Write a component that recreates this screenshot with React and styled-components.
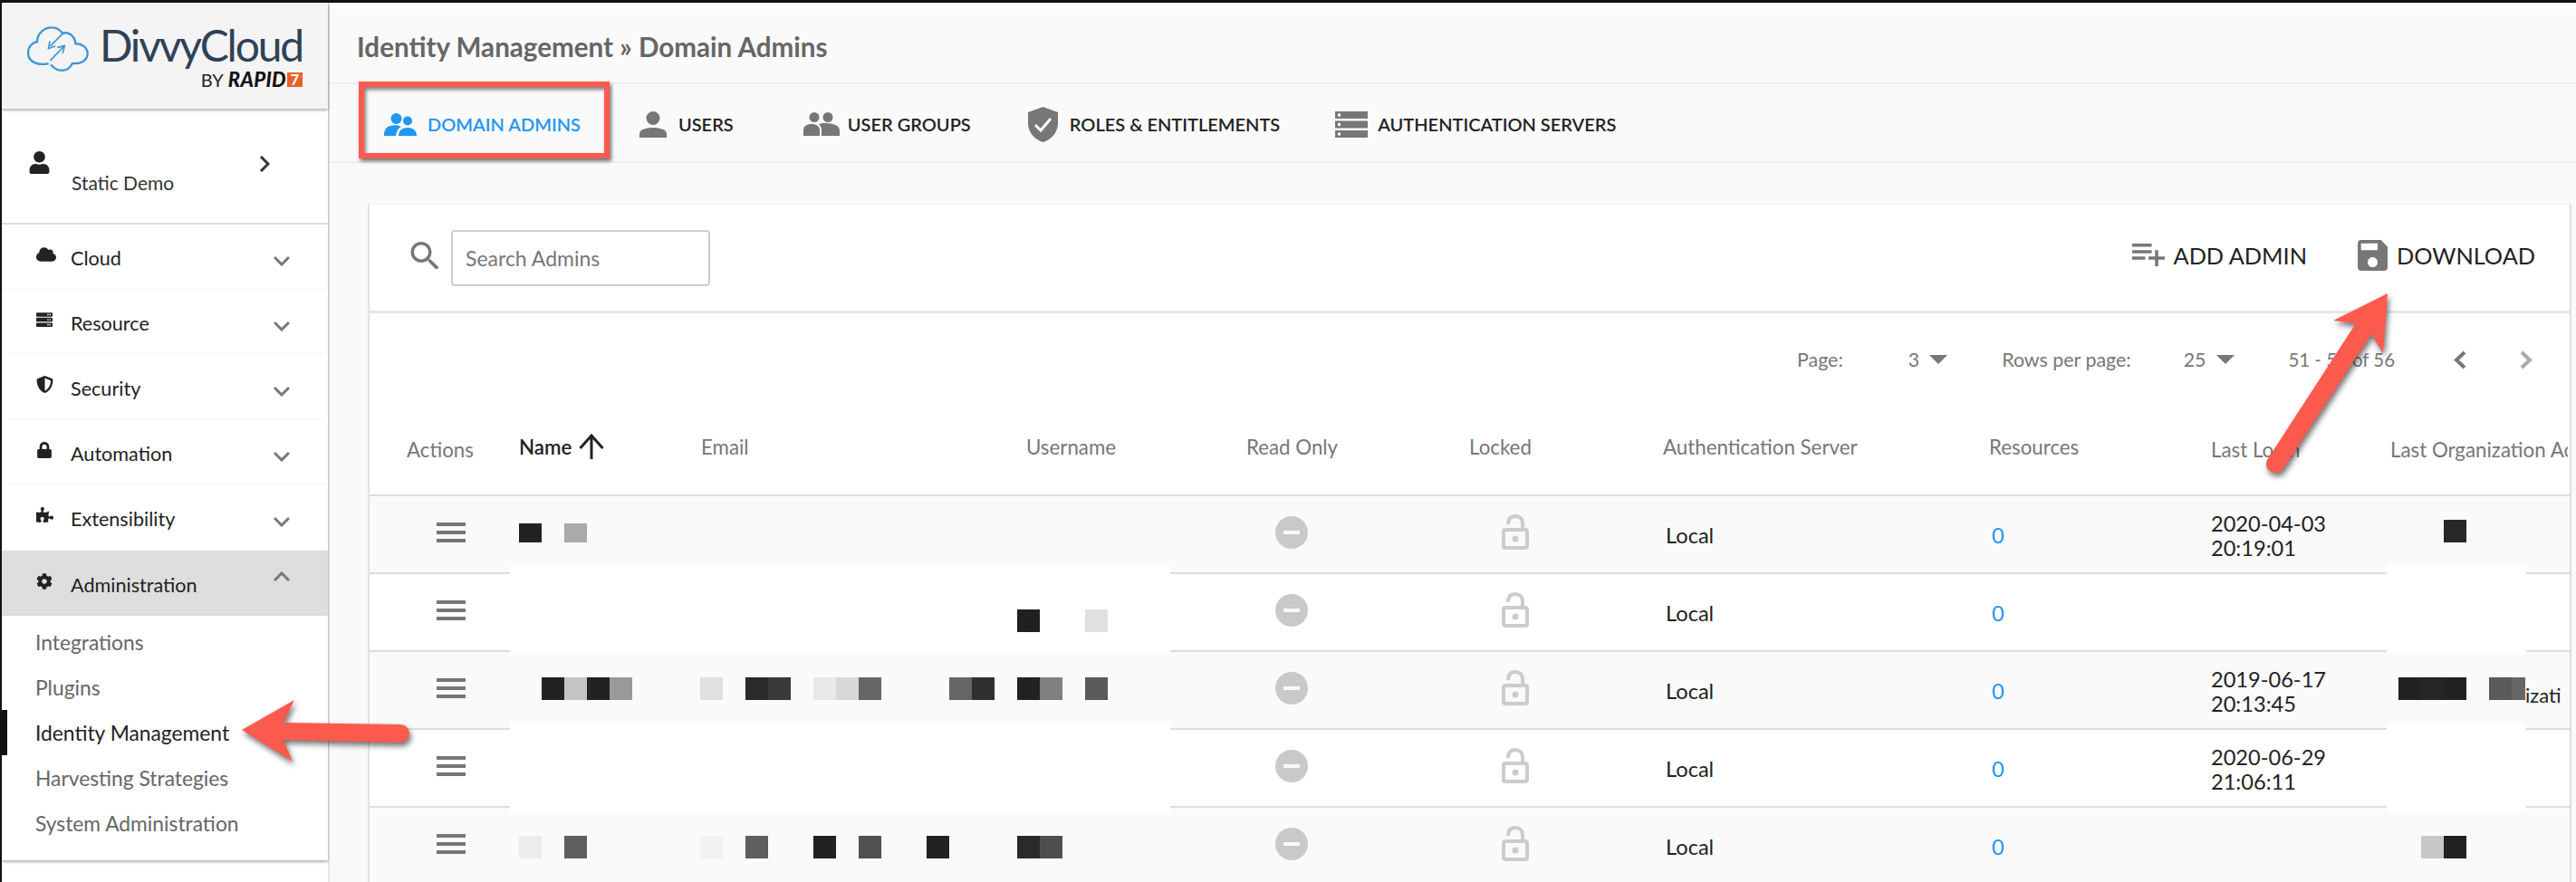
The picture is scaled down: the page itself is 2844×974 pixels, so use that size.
import React from 'react';
import styled, { createGlobalStyle } from 'styled-components';
import { FaCloud, FaServer, FaShieldAlt, FaLock, FaPuzzlePiece, FaCog, FaUser } from 'react-icons/fa';

const Global = createGlobalStyle`
  html, body { margin: 0; padding: 0; background: #fff; }
  * { box-sizing: border-box; }
  body { font-family: Lato, "Liberation Sans", sans-serif; }
`;

const Page = styled.div`
  position: relative; width: 2844px; height: 974px; overflow: hidden;
  display: flex; background: #fff;
  border-top: 3px solid #111; border-left: 2px solid #111;
`;

/* ---------- sidebar ---------- */
const Sidebar = styled.aside`
  width: 362px; flex: none; display: flex; flex-direction: column;
  border-right: 2px solid #e6e6e6; background: #fff;
`;
const SideInner = styled.div`
  display: flex; flex-direction: column; height: 947px; background: #fff;
  box-shadow: 0 2px 3px rgba(0,0,0,.3);
`;
const LogoBar = styled.div`
  height: 117px; flex: none; background: #f4f4f4; display: flex; align-items: flex-start;
  padding: 25px 0 0 28px; box-shadow: 0 2px 3px rgba(0,0,0,.3); position: relative; z-index: 1;
`;
const LogoText = styled.div`
  display: flex; flex-direction: column; align-items: flex-end; margin-left: 16px; width: 220px;
`;
const LogoName = styled.div`
  font-size: 48px; line-height: 44px; color: #2e4257; letter-spacing: -2.2px; white-space: nowrap;
`;
const LogoBy = styled.div`
  display: flex; align-items: center; font-size: 20px; line-height: 18px; color: #222; margin-top: 7px;
`;
const LogoRapid = styled.span`
  font-weight: 900; font-style: italic; font-size: 22px; line-height: 18px; color: #111; margin-left: 5px; letter-spacing: .3px;
`;
const LogoSeven = styled.span`
  background: #e8622a; color: #fff; font-size: 16px; font-weight: 900; line-height: 16px; width: 17px; text-align: center; margin-left: 1px;
`;
const UserBlock = styled.div`
  height: 128px; flex: none; border-bottom: 2px solid #ddd; display: flex; align-items: flex-start;
  padding: 47px 0 0 29px; position: relative; color: #222;
  > svg:last-child { margin-top: 5px; }
`;
const UserName = styled.span`
  font-size: 21px; color: #333; margin: 22px 0 0 23px; line-height: 26px; width: 207px;
`;
const NavRow = styled.div`
  height: 72px; flex: none; display: flex; align-items: center; padding-left: 36px; padding-right: 42px;
  background: ${p => (p.$open ? '#dedede' : '#fff')};
  border-bottom: ${p => (p.$open ? '0' : '2px solid #fafafa')};
  font-size: 21.6px; color: #222;
`;
const NavIcon = styled.span`
  width: 40px; flex: none; display: flex; margin-top: -5px; padding-left: 2px; color: #222;
`;
const NavLabel = styled.span` flex: 1; line-height: 26px; margin-top: 3px; `;
const SubList = styled.div` padding: 4px 0 16px; display: flex; flex-direction: column; `;
const SubItem = styled.div`
  height: 50px; display: flex; align-items: center; font-size: 22.8px; padding-left: ${p => (p.$active ? '31px' : '37px')};
  color: ${p => (p.$active ? '#222' : '#666')};
  border-left: ${p => (p.$active ? '6px solid #111' : '0')};
`;

/* ---------- main ---------- */
const Main = styled.main`
  flex: 1; min-width: 0; display: flex; flex-direction: column; background: #fafafa;
  border-top: 6px solid #fff;
`;
const TitleBar = styled.div`
  height: 84px; flex: none; border-bottom: 2px solid #eee; display: flex; align-items: center;
  padding: 2px 0 0 30px; font-size: 29.6px; font-weight: 700; color: #666;
`;
const TabBar = styled.div`
  height: 87px; flex: none; border-bottom: 2px solid #eee; display: flex; align-items: center; padding: 3px 0 0 60px;
`;
const Tab = styled.div`
  display: flex; align-items: center; margin-left: ${p => p.$ml || 0}px;
  font-size: 20px; font-weight: 600; white-space: nowrap; color: ${p => (p.$active ? '#2196f3' : '#222')};
  svg { flex: none; }
`;
const TabLabel = styled.span` margin-left: ${p => p.$ml}px; `;

const Card = styled.section`
  flex: 1; margin: 45px 5px 0 42px; background: #fff; min-height: 0;
  border-left: 2px solid #e3e3e3; border-top: 1px solid #f0f0f0; border-right: 2px solid #ddd;
  display: flex; flex-direction: column;
`;
const Toolbar = styled.div`
  height: 120px; flex: none; border-bottom: 3px solid #e6e6e6; display: flex; align-items: center; padding-left: 45px; padding-right: 38px;
`;
const SearchBox = styled.div`
  width: 286px; height: 62px; margin-left: 13px; border: 2px solid #ccc; border-radius: 4px;
  display: flex; align-items: center; padding-left: 14px; font-size: 23px; color: #777;
`;
const Spacer = styled.div` flex: 1; `;
const ToolBtn = styled.div`
  display: flex; align-items: center; font-size: 25.3px; color: #222; margin-left: ${p => p.$ml || 0}px; margin-top: -6px; white-space: nowrap;
  svg { margin-right: ${p => p.$gap}px; }
`;
const Pager = styled.div`
  height: 102px; flex: none; display: flex; align-items: center; justify-content: flex-end; padding-right: 41px;
  font-size: 21.4px; color: #777;
`;
const PagerItem = styled.span`
  margin-left: ${p => p.$ml}px; display: flex; align-items: center; white-space: nowrap;
  font-size: ${p => p.$size || 'inherit'};
`;

const columns = '165px 200px 350px 245px 253px 214px 360px 246px 197px 197px';
const HeadRow = styled.div`
  height: 100px; flex: none; display: grid; grid-template-columns: ${columns};
  border-bottom: 2px solid #ddd; align-items: center; font-size: 22.3px; color: #777;
`;
const HeadCell = styled.div`
  padding-left: ${p => p.$pl || 0}px; padding-bottom: ${p => (p.$high ? 8 : 2)}px;
  white-space: nowrap; overflow: hidden; display: flex; align-items: center;
  color: ${p => (p.$sorted ? '#222' : '#777')}; font-weight: ${p => (p.$sorted ? 600 : 400)};
`;
const Rows = styled.div` position: relative; flex: 1; min-height: 0; `;
const Row = styled.div`
  height: 86px; display: grid; grid-template-columns: ${columns}; align-items: center;
  border-bottom: 2px solid #ddd; background: ${p => (p.$odd ? '#fafafa' : '#fff')};
  font-size: 23.6px; color: #222;
`;
const Cell = styled.div`
  padding-left: ${p => p.$pl || 0}px; margin-top: ${p => p.$mt || 0}px; position: relative; display: flex; line-height: 27px;
  white-space: nowrap; overflow: hidden; min-width: 0;
`;
const Count = styled.span` color: #2196f3; `;
const Pixels = styled.div`
  position: relative; z-index: 2; align-self: start; display: flex; align-items: flex-start;
  margin-top: ${p => p.$top}px; padding-left: ${p => p.$pl || 0}px; height: 25px; font-size: 22px;
`;
const Pixel = styled.i`
  display: block; flex: none; width: ${p => p.$w || 25}px; height: ${p => p.$h || 25}px; background: ${p => p.$c || 'transparent'};
`;
const ClipText = styled.span` line-height: 40px; `;
const Band = styled.div`
  position: absolute; z-index: 1; height: 100px; background: #fff;
  top: ${p => p.$top}px; left: ${p => p.$left}px; width: ${p => p.$width}px;
`;

/* ---------- annotation overlays ---------- */
const Highlight = styled.div`
  position: absolute; left: 394px; top: 87px; width: 277px; height: 85px; border: 6px solid #fd5a4e;
  box-shadow: 2px 3px 4px rgba(0,0,0,.55), inset 2px 3px 4px rgba(0,0,0,.5); z-index: 5;
`;
const Arrow = styled.svg`
  position: absolute; z-index: 6; left: ${p => p.$left}px; top: ${p => p.$top}px;
  filter: drop-shadow(2px 4px 3px rgba(0,0,0,.55));
`;

/* ---------- icons ---------- */
const Chevron = ({ dir = 'down' }) => {
  const pts = dir === 'up' ? '1,10 9,2 17,10' : '1,2 9,10 17,2';
  return (
    <svg width="18" height="12" viewBox="0 0 18 12" style={{ flex: 'none', marginTop: dir === 'up' ? -15 : 10 }}>
      <polyline points={pts} fill="none" stroke="#777" strokeWidth="3" />
    </svg>
  );
};
const Logo = () => (
  <svg width="68" height="50" viewBox="90 84 204 150" style={{ flex: 'none', marginTop: 1 }} fill="none" stroke="#3d97d6" strokeWidth="7" strokeLinecap="round">
    <path d="M158 208 C128 214 93 204 93 172 C93 150 108 138 123 135 C123 105 150 87 172 88 C188 88 200 97 208 108" />
    <path d="M208 108 C225 100 248 115 250 142 C270 140 291 155 290 176 C288 200 265 210 240 207 C232 222 218 232 203 230 C190 230 178 222 170 213" />
    <path d="M168 148 L204 112 M160 158 L182 150 M160 158 L165 135" strokeWidth="5" />
    <path d="M212 150 L168 196 M214 148 L192 154 M214 148 L208 172" strokeWidth="5" />
  </svg>
);
const UsersIcon = ({ color = '#777' }) => (
  <svg width="36" height="25" viewBox="0 0 36 25" fill={color}>
    <circle cx="13.5" cy="6" r="6" />
    <circle cx="26" cy="8.5" r="5" />
    <path d="M0 25 C0 19 2 15 7 14 C11 13 16 13 19 15 C15 17 14 21 13 25 Z" />
    <path d="M16 25 C16 20 19 16 26 16 C33 16 36 20 36 25 Z" />
  </svg>
);
const UserIcon = () => (
  <svg width="30" height="29" viewBox="0 0 30 29" fill="#777">
    <circle cx="15" cy="7.5" r="7.5" />
    <path d="M0 29 V25 C0 20 7 18 15 18 C23 18 30 20 30 25 V29 Z" />
  </svg>
);
const GroupIcon = () => (
  <svg width="40" height="26" viewBox="0 0 40 26" fill="#777">
    <ellipse cx="12" cy="5.5" rx="5.5" ry="5.5" />
    <ellipse cx="27" cy="5.5" rx="5.5" ry="5.5" />
    <path d="M0 26 V20 C0 15 4 13 9 13 C14 13 18 15 18 20 V26 Z" />
    <path d="M20 26 V20 C20 16 18 14 17 13 C23 11 40 12 40 20 V26 Z" />
  </svg>
);
const ShieldIcon = () => (
  <svg width="33" height="39" viewBox="0 0 33 39">
    <path d="M16.5 0 L33 6 V18 C33 28 26 36 16.5 39 C7 36 0 28 0 18 V6 Z" fill="#777" />
    <polyline points="8,20 14,26 25,13" fill="none" stroke="#fff" strokeWidth="3" />
  </svg>
);
const ServerIcon = () => (
  <svg width="36" height="29" viewBox="0 0 36 29" fill="#777">
    <rect y="0" width="36" height="8" />
    <rect y="10.5" width="36" height="8" />
    <rect y="21" width="36" height="8" />
    <rect x="3" y="2.5" width="3" height="3" fill="#fff" />
    <rect x="3" y="13" width="3" height="3" fill="#fff" />
    <rect x="3" y="23.5" width="3" height="3" fill="#fff" />
  </svg>
);
const SearchIcon = () => (
  <svg width="32" height="30" viewBox="3 3 17.5 17" fill="#777" style={{ flex: 'none', marginTop: -5 }}>
    <path d="M15.5 14h-.79l-.28-.27C15.41 12.59 16 11.11 16 9.5 16 5.91 13.09 3 9.5 3S3 5.91 3 9.5 5.91 16 9.5 16c1.61 0 3.09-.59 4.23-1.57l.27.28v.79l5 4.99L20.49 19l-4.99-5zm-6 0C7.01 14 5 11.99 5 9.5S7.01 5 9.5 5 14 7.01 14 9.5 11.99 14 9.5 14z" />
  </svg>
);
const AddIcon = () => (
  <svg width="36" height="25" viewBox="2 6 20 14" fill="#777" preserveAspectRatio="none">
    <path d="M14 10H2v2h12v-2zm0-4H2v2h12V6zm4 8v-4h-2v4h-4v2h4v4h2v-4h4v-2h-4zM2 16h8v-2H2v2z" />
  </svg>
);
const SaveIcon = () => (
  <svg width="33" height="34" viewBox="3 3 18 18" fill="#777" preserveAspectRatio="none">
    <path d="M17 3H5c-1.11 0-2 .9-2 2v14c0 1.1.89 2 2 2h14c1.1 0 2-.9 2-2V7l-4-4zm-5 16c-1.66 0-3-1.34-3-3s1.34-3 3-3 3 1.34 3 3-1.34 3-3 3zm3-10H5V5h10v4z" />
  </svg>
);
const Caret = () => (
  <svg width="20" height="10" viewBox="0 0 20 10" fill="#777"><path d="M0 0 H20 L10 10 Z" /></svg>
);
const PageArrow = ({ left, color }) => (
  <svg width="14" height="21" viewBox="0 0 14 21">
    <polyline points={left ? '12,2 3,10.5 12,19' : '2,2 11,10.5 2,19'} fill="none" stroke={color} strokeWidth="4" />
  </svg>
);
const SortArrow = () => (
  <svg width="28" height="28" viewBox="0 0 28 28" style={{ marginLeft: 8, flex: 'none' }}>
    <path d="M14 28 V2 M1.5 16 L14 2 L26.5 16" fill="none" stroke="#222" strokeWidth="3" />
  </svg>
);
const RowMenu = () => (
  <svg width="32" height="22" viewBox="0 0 32 22" fill="#777" style={{ display: 'block' }}>
    <rect y="0" width="32" height="4" /><rect y="9" width="32" height="4" /><rect y="18" width="32" height="4" />
  </svg>
);
const ReadIcon = () => (
  <svg width="36" height="36" viewBox="0 0 36 36" style={{ display: 'block' }}>
    <circle cx="18" cy="18" r="18" fill="#c9c9c9" /><rect x="9" y="16" width="18" height="4" fill="#fafafa" />
  </svg>
);
const LockIcon = () => (
  <svg width="30" height="39" viewBox="0 0 30 39" style={{ display: 'block' }} fill="none" stroke="#ccc" strokeWidth="4">
    <rect x="2" y="17" width="26" height="20" rx="2" />
    <path d="M7 11 C7 5 10 2 15 2 C20 2 23 5 23 10 V17" />
    <circle cx="15" cy="27" r="3.5" fill="#ccc" stroke="none" />
  </svg>
);

const navItems = [
  ['Cloud', <FaCloud size={22} />], ['Resource', <FaServer size={18} />], ['Security', <FaShieldAlt size={19} />],
  ['Automation', <FaLock size={18} />], ['Extensibility', <FaPuzzlePiece size={19} />],
];
const subItems = ['Integrations', 'Plugins', 'Identity Management', 'Harvesting Strategies', 'System Administration'];

const headers = [
  ['Actions', 41, false], ['Name', 0, true, true], ['Email', 1, true], ['Username', 10, true], ['Read Only', 8, true],
  ['Locked', 1, true], ['Authentication Server', 1, true], ['Resources', 1, true], ['Last Login', 0, false], ['Last Organization Action', 1, false],
];

const K = '#222';
const rows = [
  { date: ['2020-04-03', '20:19:01'], top: 30, h: 21, name: ['#222', null, '#aaa'],
    last: { top: 26, pl: 60, cells: ['#282828'] } },
  { top: 39, user: ['#202020', null, null, '#e0e0e0'] },
  { date: ['2019-06-17', '20:13:45'], top: 28,
    name: [null, K, '#c4c4c4', K, '#999'],
    email: ['#e0e0e0', null, '#2a2a2a', '#3a3a3a', null, '#e8e8e8', '#d8d8d8', '#666'],
    userLead: ['#666', '#303030', null], user: ['#222', '#808080', null, '#5a5a5a'],
    last: { top: 28, pl: 10, cells: ['#222', '#262626', '#222', null, '#5a5a5a'], tail: true } },
  { date: ['2020-06-29', '21:06:11'], top: 28 },
  { top: 31, name: ['#ececec', null, '#5f5f5f'],
    email: ['#f2f2f2', null, '#5e5e5e', null, null, '#222', null, '#505050', null, null, '#222'],
    user: ['#2a2a2a', '#4f4f4f'], last: { top: 31, pl: 35, cells: ['#c8c8c8', '#222'] } },
];

const Blocks = ({ cells, h }) => (cells || []).map((c, i) => <Pixel key={i} $c={c} $h={h} />);

export default function App() {
  return (
    <Page>
      <Global />
      <Sidebar>
        <SideInner>
          <LogoBar>
            <Logo />
            <LogoText>
              <LogoName>DivvyCloud</LogoName>
              <LogoBy>BY<LogoRapid>RAPID</LogoRapid><LogoSeven>7</LogoSeven></LogoBy>
            </LogoText>
          </LogoBar>
          <UserBlock>
            <FaUser size={25} />
            <UserName>Static Demo</UserName>
            <svg width="12" height="18" viewBox="0 0 12 18"><polyline points="2,1 10,9 2,17" fill="none" stroke="#333" strokeWidth="3" /></svg>
          </UserBlock>
          {navItems.map(([label, icon]) => (
            <NavRow key={label}><NavIcon>{icon}</NavIcon><NavLabel>{label}</NavLabel><Chevron /></NavRow>
          ))}
          <NavRow $open><NavIcon><FaCog size={18} /></NavIcon><NavLabel>Administration</NavLabel><Chevron dir="up" /></NavRow>
          <SubList>
            {subItems.map(s => <SubItem key={s} $active={s === 'Identity Management'}>{s}</SubItem>)}
          </SubList>
        </SideInner>
      </Sidebar>
      <Main>
        <TitleBar>Identity Management » Domain Admins</TitleBar>
        <TabBar>
          <Tab $active><UsersIcon color="#2196f3" /><TabLabel $ml={12}>DOMAIN ADMINS</TabLabel></Tab>
          <Tab $ml={65}><UserIcon /><TabLabel $ml={13}>USERS</TabLabel></Tab>
          <Tab $ml={77}><GroupIcon /><TabLabel $ml={9}>USER GROUPS</TabLabel></Tab>
          <Tab $ml={63}><ShieldIcon /><TabLabel $ml={13}>ROLES &amp; ENTITLEMENTS</TabLabel></Tab>
          <Tab $ml={61}><ServerIcon /><TabLabel $ml={11}>AUTHENTICATION SERVERS</TabLabel></Tab>
        </TabBar>
        <Card>
          <Toolbar>
            <SearchIcon />
            <SearchBox>Search Admins</SearchBox>
            <Spacer />
            <ToolBtn $gap={10}><AddIcon />ADD ADMIN</ToolBtn>
            <ToolBtn $ml={56} $gap={10}><SaveIcon />DOWNLOAD</ToolBtn>
          </Toolbar>
          <Pager>
            <PagerItem $ml={0}>Page:</PagerItem>
            <PagerItem $ml={72}>3</PagerItem>
            <PagerItem $ml={11}><Caret /></PagerItem>
            <PagerItem $ml={60}>Rows per page:</PagerItem>
            <PagerItem $ml={58}>25</PagerItem>
            <PagerItem $ml={12}><Caret /></PagerItem>
            <PagerItem $ml={59} $size="20.4px">51 - 56 of 56</PagerItem>
            <PagerItem $ml={65}><PageArrow left color="#777" /></PagerItem>
            <PagerItem $ml={59}><PageArrow color="#aaa" /></PagerItem>
          </Pager>
          <HeadRow>
            {headers.map(([t, pl, high, sorted]) => (
              <HeadCell key={t} $pl={pl} $high={high} $sorted={sorted}>{t}{sorted && <SortArrow />}</HeadCell>
            ))}
          </HeadRow>
          <Rows>
            <Band $top={75} $left={155} $width={729} />
            <Band $top={250} $left={155} $width={729} />
            <Band $top={75} $left={2227} $width={154} />
            <Band $top={250} $left={2227} $width={154} />
            {rows.map((r, i) => (
              <Row key={i} $odd={i % 2 === 0}>
                <Cell $pl={74} $mt={-4}><RowMenu /></Cell>
                <Pixels $top={r.top}><Blocks cells={r.name} h={r.h} /></Pixels>
                <Pixels $top={r.top}><Blocks cells={r.email} /></Pixels>
                <Pixels $top={r.top} style={r.userLead ? { marginLeft: -75 } : undefined}>
                  <Blocks cells={r.userLead} /><Blocks cells={r.user} />
                </Pixels>
                <Cell $pl={40} $mt={-4}><ReadIcon /></Cell>
                <Cell $pl={37} $mt={-6}><LockIcon /></Cell>
                <Cell $pl={4} $mt={2}>Local</Cell>
                <Cell $mt={2} $pl={4}><Count>0</Count></Cell>
                <Cell $mt={3}>{r.date && <div>{r.date[0]}<br />{r.date[1]}</div>}</Cell>
                {r.last ? (
                  <Pixels $top={r.last.top} $pl={r.last.pl}>
                    <Blocks cells={r.last.cells} />
                    {r.last.tail && <><Pixel $c="#666" $w={15} /><ClipText>izati</ClipText></>}
                  </Pixels>
                ) : <div />}
              </Row>
            ))}
          </Rows>
        </Card>
      </Main>
      <Highlight />
      <Arrow $left={253} $top={757} width="205" height="95" viewBox="255 760 205 95">
        <path d="M267 806 L325 773 L313 798 L442 800 A10 10 0 0 1 442 820 L313 817 L323 841 Z" fill="#fd5a4e" />
      </Arrow>
      <Arrow $left={2488} $top={307} width="160" height="230" viewBox="2490 310 160 230">
        <path d="M2636 324 L2631 390 L2618 369 L2522 516 Q2515 526 2506 520 Q2500 516 2503 508 L2601 357 L2576 354 Z" fill="#fd5a4e" />
      </Arrow>
    </Page>
  );
}
